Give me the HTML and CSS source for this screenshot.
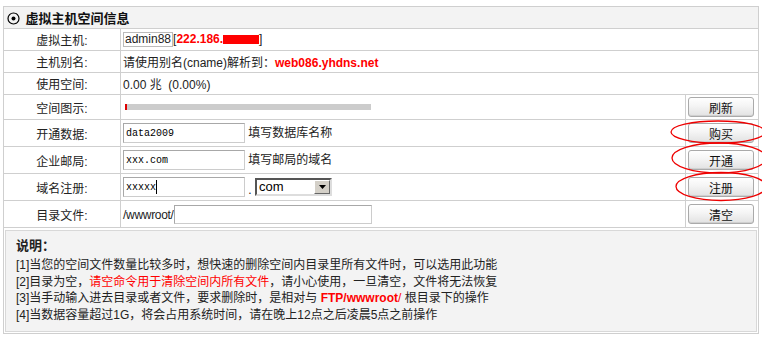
FILE: index.html
```html
<!DOCTYPE html>
<html lang="zh-CN">
<head>
    <meta charset="UTF-8">
    <title>虚拟主机空间信息</title>
    <link rel="stylesheet" href="styles.css">
</head>
<body>
    <div class="page">
        <table class="info">
            <colgroup>
                <col class="col-label">
                <col>
                <col class="col-act">
            </colgroup>
            <tr class="head">
                <th colspan="3">
                    <svg class="dot-icon" width="13" height="13" viewBox="0 0 13 13">
                        <circle cx="6.5" cy="6.5" r="5.5" fill="none" stroke="#000" stroke-width="1.2"/>
                        <circle cx="6.5" cy="6.5" r="2" fill="#000"/>
                    </svg>
                    虚拟主机空间信息
                </th>
            </tr>
            <tr class="row-s">
                <td class="label">虚拟主机:</td>
                <td colspan="2"><span class="host-box">admin88</span>[<b class="red">222.186.</b><span class="mask"></span>]</td>
            </tr>
            <tr class="row-s">
                <td class="label">主机别名:</td>
                <td colspan="2">请使用别名(cname)解析到：<b class="red">web086.yhdns.net</b></td>
            </tr>
            <tr class="row-s">
                <td class="label">使用空间:</td>
                <td colspan="2">0.00 兆&nbsp; (0.00%)</td>
            </tr>
            <tr class="row-m">
                <td class="label">空间图示:</td>
                <td><div class="bar"><div class="bar-used" style="width: 2px"></div></div></td>
                <td class="act"><button class="btn">刷新</button></td>
            </tr>
            <tr class="row-l">
                <td class="label">开通数据:</td>
                <td><input class="field" type="text" value="data2009"> 填写数据库名称</td>
                <td class="act"><button class="btn">购买</button></td>
            </tr>
            <tr class="row-l">
                <td class="label">企业邮局:</td>
                <td><input class="field" type="text" value="xxx.com"> 填写邮局的域名</td>
                <td class="act"><button class="btn">开通</button></td>
            </tr>
            <tr class="row-l">
                <td class="label">域名注册:</td>
                <td>
                    <div class="domain">
                        <span class="field caret-field">xxxxx<span class="caret"></span></span>
                        <span class="dot">.</span>
                        <span class="select">
                            <span class="select-text">com</span>
                            <span class="select-arrow">
                                <svg width="7" height="4" viewBox="0 0 7 4"><path d="M0 0H7L3.5 4Z" fill="#000"/></svg>
                            </span>
                        </span>
                    </div>
                </td>
                <td class="act"><button class="btn">注册</button></td>
            </tr>
            <tr class="row-l">
                <td class="label">目录文件:</td>
                <td><span class="root">/wwwroot/</span><input class="field dir" type="text"></td>
                <td class="act"><button class="btn">清空</button></td>
            </tr>
            <tr>
                <td colspan="3" class="note-cell">
                    <div class="note">
                        <div class="note-title">说明：</div>
                        <div>[1]当您的空间文件数量比较多时，想快速的删除空间内目录里所有文件时，可以选用此功能</div>
                        <div>[2]目录为空，<span class="red">请空命令用于清除空间内所有文件</span>，请小心使用，一旦清空，文件将无法恢复</div>
                        <div>[3]当手动输入进去目录或者文件，要求删除时，是相对与 <b class="red">FTP/wwwroot</b><span class="red">/</span> 根目录下的操作</div>
                        <div>[4]当数据容量超过1G，将会占用系统时间，请在晚上12点之后凌晨5点之前操作</div>
                    </div>
                </td>
            </tr>
        </table>

        <!-- hand-drawn marks over the buttons -->
        <svg class="marks" width="762" height="339" viewBox="0 0 762 339">
            <ellipse cx="718" cy="132" rx="47" ry="11" fill="none" stroke="#e00" stroke-width="1.3"/>
            <ellipse cx="719" cy="158" rx="47" ry="15" fill="none" stroke="#e00" stroke-width="1.3"/>
            <ellipse cx="721" cy="186.5" rx="45" ry="14" fill="none" stroke="#e00" stroke-width="1.3"/>
        </svg>
    </div>
</body>
</html>
```

FILE: styles.css
```css
html, body {
    margin: 0;
    padding: 0;
    background: #fff;
    overflow: hidden;
}
body {
    font-family: "Liberation Sans", "Noto Sans CJK SC", sans-serif;
    font-size: 12px;
    color: #222;
}
.page {
    position: relative;
    width: 762px;
    height: 339px;
    padding: 6px 0 0 3px;
    box-sizing: border-box;
}
.info {
    width: 756px;
    border-collapse: collapse;
    table-layout: fixed;
}
.col-label {
    width: 117px;
}
.col-act {
    width: 73px;
}
.info th,
.info td {
    border: 1px solid #cfcfcf;
    padding: 0 0 0 2px;
    vertical-align: middle;
    white-space: nowrap;
}
.head th {
    height: 21px;
    background: #f3f3f3;
    text-align: left;
    font-size: 13px;
    font-weight: bold;
    color: #111;
    padding-left: 3px;
}
.dot-icon {
    vertical-align: -2px;
    margin-right: 2px;
}
.row-s td { height: 21px; }
.row-m td { height: 24px; }
.row-l td { height: 26px; }
.info td.label {
    text-align: center;
    padding: 0;
}
.info td.act {
    padding: 0 0 0 2px;
}
.red {
    color: #f00;
}
b.red {
    font-weight: bold;
}
.host-box {
    display: inline-block;
    border: 1px solid #bbb;
    padding: 0 1px;
    line-height: 13px;
}
.mask {
    display: inline-block;
    width: 36px;
    height: 9px;
    background: #f00;
    vertical-align: -1px;
}
.bar {
    display: flex;
    width: 246px;
    height: 6px;
    margin-left: 2px;
    background: #ccc;
}
.bar-used {
    background: #d00;
}
.btn {
    display: block;
    width: 66px;
    height: 20px;
    padding: 0;
    border: 1px solid #aaa;
    border-radius: 3px;
    background: linear-gradient(#fff 0%, #f4f4f4 45%, #e2e2e2 100%);
    box-shadow: inset 0 -1px 0 #d0d0d0;
    font: 12px "Liberation Sans", "Noto Sans CJK SC", sans-serif;
    color: #111;
}
.field {
    box-sizing: border-box;
    width: 122px;
    height: 20px;
    margin: 0;
    padding: 0 2px;
    border: 1px solid #a8a8a8;
    border-right-color: #ccc;
    border-bottom-color: #ccc;
    font: 10px "Liberation Mono", monospace;
    color: #000;
    vertical-align: middle;
}
.domain {
    display: flex;
    align-items: center;
}
.caret-field {
    display: flex;
    align-items: center;
}
.caret {
    width: 1px;
    height: 14px;
    background: #000;
}
.dot {
    width: 10px;
    text-align: center;
    padding-top: 6px;
}
.select {
    display: flex;
    width: 77px;
    height: 18px;
    box-sizing: border-box;
    border: 2px solid #555;
    border-right-color: #ddd;
    border-bottom-color: #ddd;
    background: #fff;
}
.select-text {
    flex: 1;
    padding-left: 2px;
    font-size: 13px;
    line-height: 14px;
    color: #000;
}
.select-arrow {
    display: flex;
    align-items: center;
    justify-content: center;
    width: 14px;
    background: #d4d0c8;
    border: 1px solid #fff;
    border-right-color: #666;
    border-bottom-color: #666;
}
.root {
    letter-spacing: -0.3px;
    vertical-align: middle;
}
.field.dir {
    width: 198px;
    height: 19px;
}
.info td.note-cell {
    padding: 2px 1px 1px 1px;
}
.note {
    height: 102px;
    box-sizing: border-box;
    border: 1px solid #d8d8d8;
    background: #f3f3f3;
    padding: 7px 10px 0 10px;
    line-height: 16.4px;
    color: #222;
}
.note-title {
    font-weight: bold;
    font-size: 13px;
    margin-bottom: 3px;
}
.marks {
    position: absolute;
    top: 0;
    left: 0;
    pointer-events: none;
}
```
